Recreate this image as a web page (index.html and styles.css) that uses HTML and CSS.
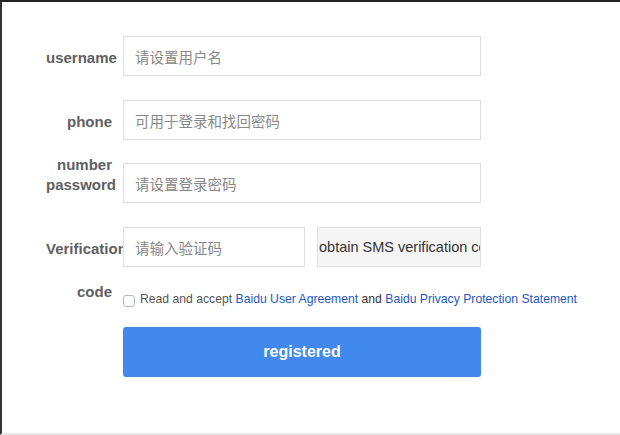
FILE: index.html
```html
<!DOCTYPE html>
<html lang="zh">
<head>
<meta charset="utf-8">
<title>Register</title>
<link rel="stylesheet" href="styles.css">
</head>
<body>
<div class="frame">
  <form class="form">
    <div class="row">
      <label class="label">username</label>
      <input class="field field-wide" type="text" placeholder="请设置用户名">
    </div>
    <div class="row row-tight">
      <label class="label">phone number</label>
      <input class="field field-wide" type="text" placeholder="可用于登录和找回密码">
    </div>
    <div class="row">
      <label class="label">password</label>
      <input class="field field-wide" type="password" placeholder="请设置登录密码">
    </div>
    <div class="row">
      <label class="label">Verification code</label>
      <input class="field field-code" type="text" placeholder="请输入验证码">
      <div class="sms-btn">obtain SMS verification code</div>
    </div>
    <div class="agree">
      <span class="check"></span>
      <span class="agree-text">Read and accept <a class="link">Baidu User Agreement</a> <span class="and">and</span> <a class="link">Baidu Privacy Protection Statement</a></span>
    </div>
    <div class="submit-row">
      <div class="submit">registered</div>
    </div>
  </form>
</div>
</body>
</html>
```

FILE: styles.css
```css
html, body {
  margin: 0;
  padding: 0;
  background: #fff;
}

.frame {
  box-sizing: border-box;
  height: 435px;
  border-top: 2px solid #222;
  border-left: 2px solid #333;
  border-bottom: 2px solid #e6e6e6;
  padding-top: 34px;
  padding-left: 44px;
  font-family: "Liberation Sans", Arial, "Noto Sans CJK SC", sans-serif;
}

.form {
  margin: 0;
}

.row {
  display: flex;
  align-items: flex-start;
  height: 40px;
  margin-bottom: 24px;
}

.row-tight {
  margin-bottom: 23px;
}

.label {
  flex: none;
  width: 66px;
  margin-right: 11px;
  text-align: right;
  font-size: 15px;
  font-weight: bold;
  line-height: 43px;
  color: #606060;
}

.field {
  flex: none;
  box-sizing: border-box;
  height: 40px;
  margin: 0;
  padding: 0 11px;
  border: 1px solid #dedede;
  border-radius: 0;
  background: #fff;
  outline: none;
  font-family: "Noto Sans CJK SC", "Liberation Sans", sans-serif;
  font-size: 14.5px;
  color: #333;
}

.field::placeholder {
  color: #888;
}

.field-wide {
  width: 358px;
}

.field-code {
  width: 182px;
  margin-right: 12px;
}

.sms-btn {
  flex: none;
  box-sizing: border-box;
  width: 164px;
  height: 40px;
  padding: 0 1px;
  border: 1px solid #dedede;
  background: #f5f5f5;
  overflow: hidden;
  white-space: nowrap;
  font-size: 14.5px;
  line-height: 38px;
  color: #333;
}

.agree {
  display: flex;
  align-items: center;
  margin-top: 0;
  padding-left: 77px;
  height: 16px;
  font-size: 12.2px;
  color: #555;
}

.check {
  flex: none;
  box-sizing: border-box;
  width: 12px;
  height: 12px;
  margin-top: 3px;
  margin-right: 5px;
  border: 1px solid #b9b9b9;
  border-radius: 3px;
  background: #fff;
}

.agree-text {
  white-space: nowrap;
  line-height: 16px;
}

.link {
  color: #2459c4;
  text-decoration: none;
}

.and {
  color: #333;
}

.submit-row {
  padding-left: 77px;
  margin-top: 20px;
}

.submit {
  box-sizing: border-box;
  width: 358px;
  height: 50px;
  border-radius: 3px;
  background: #4189ec;
  color: #fff;
  text-align: center;
  font-size: 16px;
  font-weight: bold;
  line-height: 50px;
}
```
